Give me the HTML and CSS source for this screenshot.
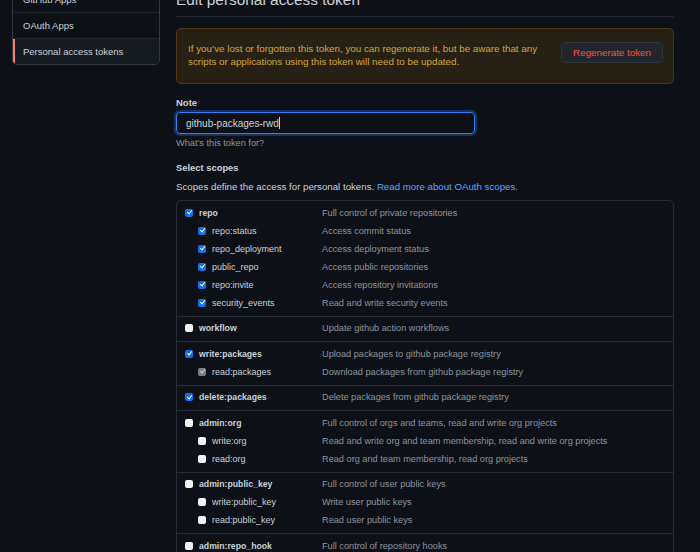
FILE: index.html
```html
<!DOCTYPE html>
<html lang="en">
<head>
<meta charset="utf-8">
<title>Edit personal access token</title>
<link rel="stylesheet" href="styles.css">
</head>
<body>
<div class="page">
  <nav class="menu">
    <a class="menu-item">GitHub Apps</a>
    <a class="menu-item">OAuth Apps</a>
    <a class="menu-item selected">Personal access tokens</a>
  </nav>
  <main class="main">
    <h2 class="subhead">Edit personal access token</h2>
    <div class="flash">
      <p class="flash-text">If you’ve lost or forgotten this token, you can regenerate it, but be aware that any<br>scripts or applications using this token will need to be updated.</p>
      <button class="btn-danger">Regenerate token</button>
    </div>
    <label class="form-label">Note</label>
    <div class="input"><span>github-packages-rwd</span><span class="caret"></span></div>
    <p class="note">What’s this token for?</p>
    <h3 class="form-label scopes-title">Select scopes</h3>
    <p class="desc">Scopes define the access for personal tokens. <a href="#">Read more about OAuth scopes.</a></p>
    <div class="scopes">
      <div class="group">
        <div class="row parent"><span class="name"><span class="cb on"></span>repo</span><span class="info">Full control of private repositories</span></div>
        <div class="row child"><span class="name"><span class="cb on"></span>repo:status</span><span class="info">Access commit status</span></div>
        <div class="row child"><span class="name"><span class="cb on"></span>repo_deployment</span><span class="info">Access deployment status</span></div>
        <div class="row child"><span class="name"><span class="cb on"></span>public_repo</span><span class="info">Access public repositories</span></div>
        <div class="row child"><span class="name"><span class="cb on"></span>repo:invite</span><span class="info">Access repository invitations</span></div>
        <div class="row child"><span class="name"><span class="cb on"></span>security_events</span><span class="info">Read and write security events</span></div>
      </div>
      <div class="group">
        <div class="row parent"><span class="name"><span class="cb"></span>workflow</span><span class="info">Update github action workflows</span></div>
      </div>
      <div class="group">
        <div class="row parent"><span class="name"><span class="cb on"></span>write:packages</span><span class="info">Upload packages to github package registry</span></div>
        <div class="row child"><span class="name"><span class="cb dis"></span>read:packages</span><span class="info">Download packages from github package registry</span></div>
      </div>
      <div class="group">
        <div class="row parent"><span class="name"><span class="cb on"></span>delete:packages</span><span class="info">Delete packages from github package registry</span></div>
      </div>
      <div class="group">
        <div class="row parent"><span class="name"><span class="cb"></span>admin:org</span><span class="info">Full control of orgs and teams, read and write org projects</span></div>
        <div class="row child"><span class="name"><span class="cb"></span>write:org</span><span class="info">Read and write org and team membership, read and write org projects</span></div>
        <div class="row child"><span class="name"><span class="cb"></span>read:org</span><span class="info">Read org and team membership, read org projects</span></div>
      </div>
      <div class="group">
        <div class="row parent"><span class="name"><span class="cb"></span>admin:public_key</span><span class="info">Full control of user public keys</span></div>
        <div class="row child"><span class="name"><span class="cb"></span>write:public_key</span><span class="info">Write user public keys</span></div>
        <div class="row child"><span class="name"><span class="cb"></span>read:public_key</span><span class="info">Read user public keys</span></div>
      </div>
      <div class="group">
        <div class="row parent"><span class="name"><span class="cb"></span>admin:repo_hook</span><span class="info">Full control of repository hooks</span></div>
        <div class="row child"><span class="name"><span class="cb"></span>write:repo_hook</span><span class="info">Write repository hooks</span></div>
        <div class="row child"><span class="name"><span class="cb"></span>read:repo_hook</span><span class="info">Read repository hooks</span></div>
      </div>
    </div>
  </main>
</div>
</body>
</html>
```
FILE: styles.css
```css
html, body {
  margin: 0;
  background: #0d1117;
}
body {
  font-family: "Liberation Sans", Arial, sans-serif;
  color: #c9d1d9;
  overflow: hidden;
}
.page {
  display: flex;
  align-items: flex-start;
  gap: 16px;
  padding-left: 12px;
  margin-top: -14px;
}

/* side menu */
.menu {
  flex: none;
  width: 148px;
  box-sizing: border-box;
  border: 1px solid #30363d;
  border-radius: 5px;
  overflow: hidden;
}
.menu-item {
  display: block;
  padding: 6px 10px;
  line-height: 13px;
  font-size: 9.5px;
  color: #c9d1d9;
  border-top: 1px solid #21262d;
}
.menu-item:first-child {
  border-top: none;
}
.menu-item.selected {
  background: #161b22;
  box-shadow: inset 2px 0 0 #f78166;
}

/* main column */
.main {
  flex: none;
  width: 498px;
  margin-top: 4px;
}
.subhead {
  margin: 0;
  font-size: 15.4px;
  font-weight: 400;
  line-height: 19px;
  padding-bottom: 7px;
  border-bottom: 1px solid #21262d;
}
.flash {
  margin-top: 11px;
  display: flex;
  align-items: flex-start;
  gap: 16px;
  padding: 13px 10px 15px 11px;
  border: 1px solid #4a3913;
  border-radius: 5px;
  background: #272115;
}
.flash-text {
  flex: 1;
  margin: 0;
  font-size: 9.8px;
  line-height: 13px;
  color: #d3a536;
}
.btn-danger {
  flex: none;
  height: 21px;
  padding: 0 11px;
  font-family: inherit;
  font-size: 9.8px;
  color: #f85149;
  background: #21262d;
  border: 1px solid #30363d;
  border-radius: 5px;
}
.form-label {
  display: block;
  margin: 11.5px 0 0;
  font-size: 9.5px;
  font-weight: 700;
  line-height: 13px;
}
.input {
  margin-top: 3.5px;
  width: 299px;
  height: 22px;
  box-sizing: border-box;
  display: flex;
  align-items: center;
  padding: 0 9px;
  font-size: 10px;
  color: #c9d1d9;
  border: 1px solid #2f81f7;
  border-radius: 4px;
  box-shadow: 0 0 0 2px rgba(31, 111, 235, 0.35);
}
.caret {
  width: 1px;
  height: 12px;
  background: #c9d1d9;
}
.note {
  margin: 3px 0 0;
  font-size: 9.2px;
  line-height: 13px;
  color: #8b949e;
}
.scopes-title {
  margin-top: 10.5px;
  font-size: 9.4px;
}
.desc {
  margin: 6px 0 0;
  font-size: 9.7px;
  line-height: 13px;
}
.desc a {
  color: #58a6ff;
  text-decoration: none;
}

/* scopes table */
.scopes {
  margin-top: 7.5px;
  border: 1px solid #262c36;
  border-radius: 5px;
}
.group {
  padding: 2.5px 0 4px;
  border-top: 1px solid #262c36;
}
.group:first-child {
  border-top: none;
}
.row {
  display: flex;
  align-items: center;
  height: 18px;
  padding-left: 8px;
}
.name {
  flex: none;
  width: 137px;
  box-sizing: border-box;
  display: flex;
  align-items: center;
  gap: 6px;
  font-size: 9px;
  color: #c9d1d9;
}
.parent .name {
  font-weight: 700;
  font-size: 8.7px;
}
.child .name {
  padding-left: 13px;
}
.info {
  font-size: 9.2px;
  color: #8b949e;
  white-space: nowrap;
}
.cb {
  flex: none;
  position: relative;
  width: 8px;
  height: 8px;
  border-radius: 2px;
  background: #f2f2f2;
}
.cb.on {
  background: #1170f0;
}
.cb.dis {
  background: #7d7d7d;
}
.cb.on::after,
.cb.dis::after {
  content: "";
  position: absolute;
  left: 2.6px;
  top: 0.6px;
  width: 2px;
  height: 4.2px;
  border: solid #fff;
  border-width: 0 1.3px 1.3px 0;
  transform: rotate(40deg);
}
.cb.dis::after {
  border-color: #d0d0d0;
}
```
